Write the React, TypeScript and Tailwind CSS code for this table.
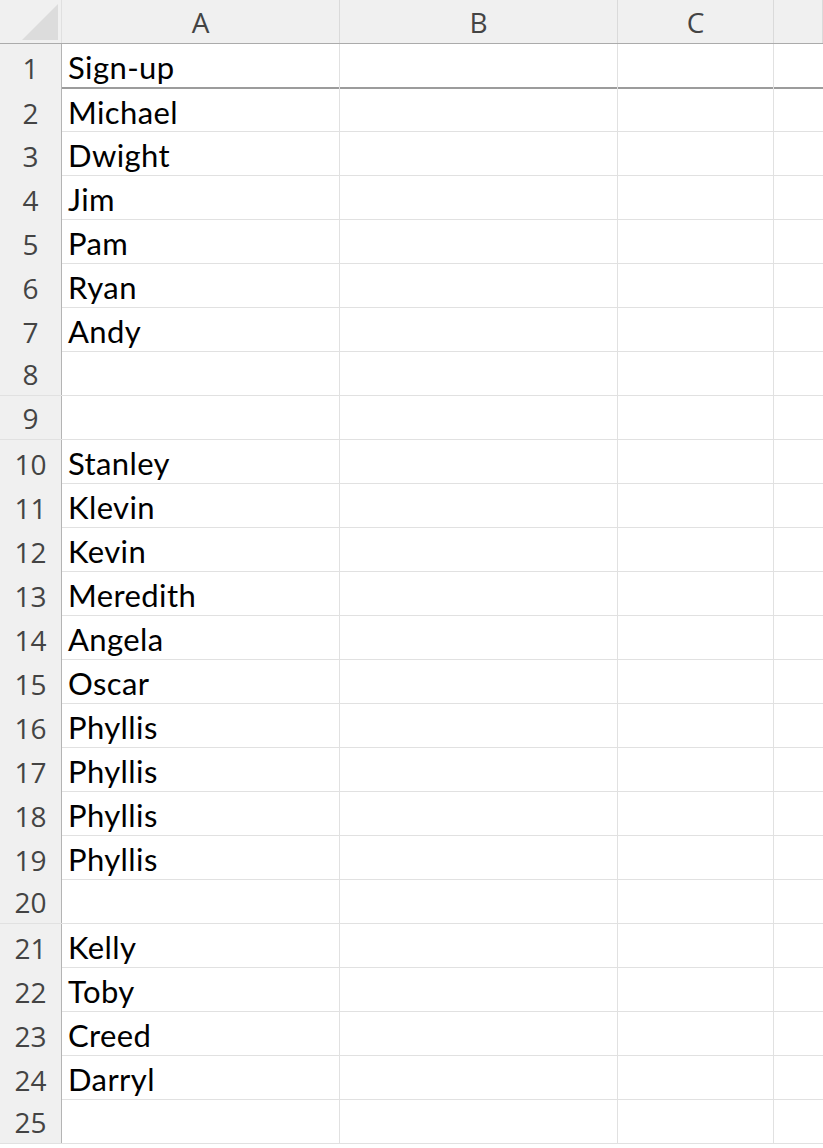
import React from 'react';

const names: string[] = [
  'Sign-up',
  'Michael',
  'Dwight',
  'Jim',
  'Pam',
  'Ryan',
  'Andy',
  '',
  '',
  'Stanley',
  'Klevin',
  'Kevin',
  'Meredith',
  'Angela',
  'Oscar',
  'Phyllis',
  'Phyllis',
  'Phyllis',
  'Phyllis',
  '',
  'Kelly',
  'Toby',
  'Creed',
  'Darryl',
  '',
];

const cols = 'grid grid-cols-[62px_278px_278px_156px_1fr]';

function HeaderRow() {
  return (
    <div className={`${cols} h-[44px] bg-[#f0f0f0] border-b border-[#ababab] text-[#444444]`}>
      <div className="relative border-r border-[#e0e0e0]">
        <svg className="absolute left-0 top-0" width="62" height="43" viewBox="0 0 62 43">
          <polygon points="58,4 58,40 22,40" fill="#dcdcdc" />
        </svg>
      </div>
      {['A', 'B', 'C', ''].map((l, i) => (
        <div
          key={i}
          className="flex items-center justify-center border-r border-[#dadada] text-[28px]"
          style={{ fontFamily: '"Open Sans", sans-serif' }}
        >
          {l}
        </div>
      ))}
    </div>
  );
}

function DataRow({ n, name }: { n: number; name: string }) {
  const rowClass =
    n === 1
      ? 'h-[45px] border-b-2 border-[#9c9c9c]'
      : n === 2
        ? 'h-[43px] border-b border-[#e1e1e1]'
        : 'h-[44px] border-b border-[#e1e1e1]';
  return (
    <div className={`${cols} ${rowClass}`}>
      <div
        className="flex items-center justify-center bg-[#f0f0f0] border-r border-[#b4b4b4] text-[28px] text-[#444444]"
        style={{ fontFamily: '"Open Sans", sans-serif' }}
      >
        {n}
      </div>
      <div
        className="flex items-center border-r border-[#e1e1e1] pl-[6px] text-[31px] tracking-[0.4px] text-black pb-[1px]"
        style={{ fontFamily: 'Lato, sans-serif' }}
      >
        {name}
      </div>
      <div className="border-r border-[#e1e1e1]" />
      <div className="border-r border-[#e1e1e1]" />
      <div />
    </div>
  );
}

export default function App() {
  return (
    <div className="w-[823px] h-[1148px] bg-white overflow-hidden">
      <HeaderRow />
      {names.map((name, i) => (
        <DataRow key={i} n={i + 1} name={name} />
      ))}
    </div>
  );
}
